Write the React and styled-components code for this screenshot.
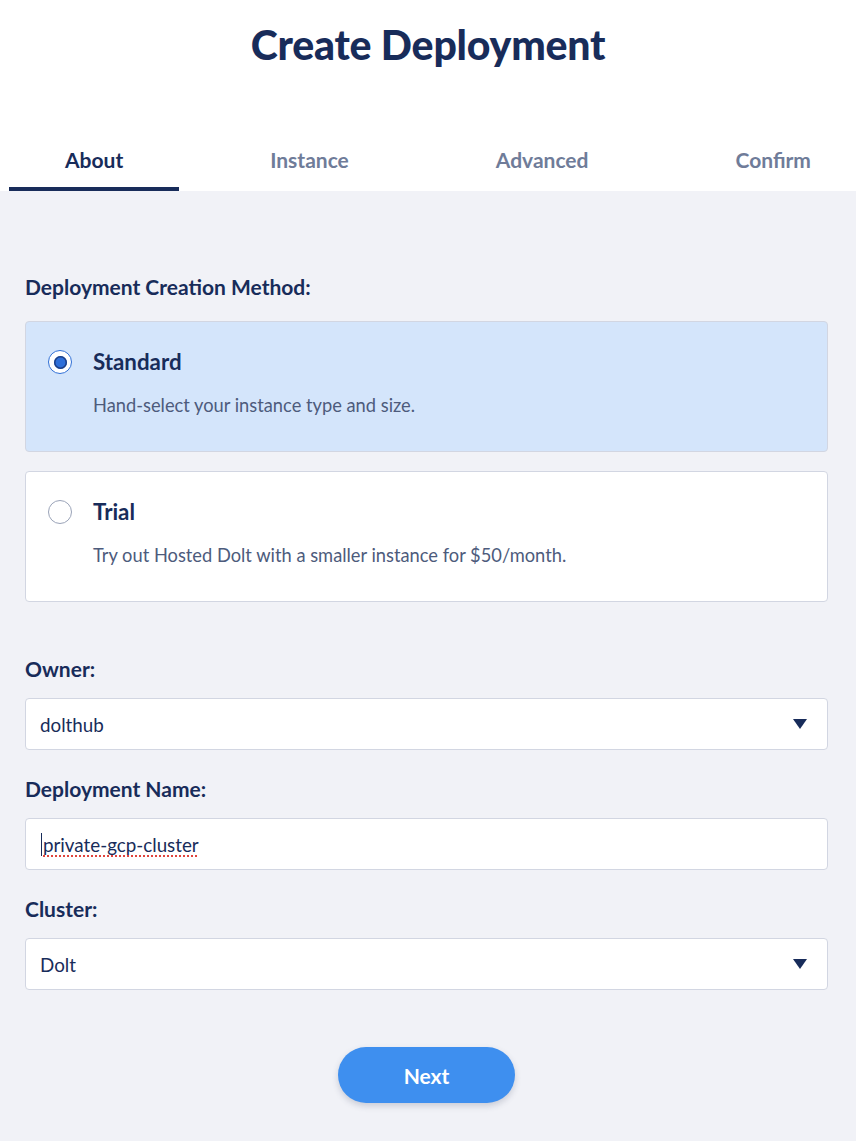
import React, { useState } from "react";
import styled, { createGlobalStyle } from "styled-components";

const GlobalStyle = createGlobalStyle`
  html, body { margin: 0; padding: 0; }
  body {
    font-family: Lato, "Noto Sans", "Liberation Sans", sans-serif;
    background: #f1f2f7;
    color: #182c5a;
  }
  * { box-sizing: border-box; }
`;

const Page = styled.div`
  min-height: 1141px;
  display: flex;
  flex-direction: column;
`;

const Header = styled.div`
  background: #ffffff;
  display: flex;
  flex-direction: column;
`;

const Title = styled.h1`
  margin: 0;
  padding-top: 20px;
  height: 130px;
  text-align: center;
  font-size: 41px;
  font-weight: 900;
  letter-spacing: -0.2px;
  color: #182c5a;
`;

const Tabs = styled.div`
  display: flex;
  gap: 35px;
  padding-left: 9px;
  height: 61px;
`;

const Tab = styled.div`
  padding: 0 56px;
  display: flex;
  align-items: center;
  justify-content: center;
  font-size: 21px;
  font-weight: 700;
  color: ${(p) => (p.$active ? "#182c5a" : "#6f7c99")};
  border-bottom: 4px solid ${(p) => (p.$active ? "#182c5a" : "transparent")};
  padding-top: 2px;
  white-space: nowrap;
`;

const Body = styled.div`
  padding: 84px 28px 40px 25px;
  display: flex;
  flex-direction: column;
`;

const Label = styled.div`
  font-size: 21px;
  font-weight: 700;
  color: #182c5a;
  line-height: 24px;
  margin-bottom: ${(p) => p.$mb || 17}px;
`;

const Options = styled.div`
  display: flex;
  flex-direction: column;
  gap: 19px;
  margin-bottom: 55px;
`;

const OptionCard = styled.label`
  display: grid;
  grid-template-columns: 24px 1fr;
  column-gap: 21px;
  height: 131px;
  padding: 27px 22px 0 22px;
  border-radius: 4px;
  border: 1px solid #d2d6e2;
  background: ${(p) => (p.$selected ? "#d4e5fb" : "#ffffff")};
  cursor: pointer;
`;

const Radio = styled.span`
  width: 24px;
  height: 24px;
  border-radius: 50%;
  margin-top: 1px;
  background: #ffffff;
  border: ${(p) => (p.$checked ? "1.5px solid #2f6fd6" : "1.5px solid #9aa3b8")};
  display: flex;
  align-items: center;
  justify-content: center;
  &::after {
    content: "";
    width: 13px;
    height: 13px;
    border-radius: 50%;
    background: ${(p) => (p.$checked ? "#2e6fd9" : "transparent")};
    box-shadow: ${(p) => (p.$checked ? "0 0 0 1.5px #1d3f86 inset" : "none")};
  }
`;

const OptionText = styled.div`
  display: flex;
  flex-direction: column;
`;

const OptionTitle = styled.div`
  font-size: 22.3px;
  font-weight: 700;
  color: #182c5a;
  line-height: 26px;
  margin-bottom: 18px;
`;

const OptionDesc = styled.div`
  font-size: 18.3px;
  color: #4d5b7c;
  line-height: 24px;
`;

const Field = styled.div`
  display: flex;
  flex-direction: column;
  margin-bottom: 27px;
`;

const Box = styled.div`
  height: 52px;
  background: #ffffff;
  border: 1px solid #d2d6e2;
  border-radius: 4px;
  display: flex;
  align-items: center;
  justify-content: space-between;
  padding: 0 20px 0 14px;
  font-size: 18.8px;
  color: #182c5a;
`;

const Caret = styled.span`
  width: 0;
  height: 0;
  border-left: 7px solid transparent;
  border-right: 7px solid transparent;
  border-top: 10px solid #182c5a;
`;

const InputText = styled.span`
  padding-left: 1px;
  border-left: 1.5px solid #182c5a;
  margin-left: 1px;
  text-decoration: underline dotted #e0443c;
  text-decoration-thickness: 2px;
  text-underline-offset: 4px;
`;

const Actions = styled.div`
  display: flex;
  justify-content: center;
  padding-top: 30px;
`;

const NextButton = styled.button`
  width: 177px;
  height: 56px;
  border: none;
  border-radius: 28px;
  background: #3e8fef;
  color: #ffffff;
  font-family: inherit;
  font-size: 21px;
  font-weight: 700;
  box-shadow: 0 3px 6px rgba(60, 70, 100, 0.22);
  cursor: pointer;
`;

const options = [
  { id: "standard", title: "Standard", desc: "Hand-select your instance type and size." },
  { id: "trial", title: "Trial", desc: "Try out Hosted Dolt with a smaller instance for $50/month." },
];

export default function App() {
  const [method, setMethod] = useState("standard");
  return (
    <Page>
      <GlobalStyle />
      <Header>
        <Title>Create Deployment</Title>
        <Tabs>
          <Tab $active>About</Tab>
          <Tab>Instance</Tab>
          <Tab>Advanced</Tab>
          <Tab>Confirm</Tab>
        </Tabs>
      </Header>
      <Body>
        <Label $mb={22}>Deployment Creation Method:</Label>
        <Options>
          {options.map((o) => (
            <OptionCard key={o.id} $selected={method === o.id} onClick={() => setMethod(o.id)}>
              <Radio $checked={method === o.id} />
              <OptionText>
                <OptionTitle>{o.title}</OptionTitle>
                <OptionDesc>{o.desc}</OptionDesc>
              </OptionText>
            </OptionCard>
          ))}
        </Options>
        <Field>
          <Label>Owner:</Label>
          <Box>
            <span>dolthub</span>
            <Caret />
          </Box>
        </Field>
        <Field>
          <Label>Deployment Name:</Label>
          <Box>
            <InputText>private-gcp-cluster</InputText>
          </Box>
        </Field>
        <Field>
          <Label>Cluster:</Label>
          <Box>
            <span>Dolt</span>
            <Caret />
          </Box>
        </Field>
        <Actions>
          <NextButton>Next</NextButton>
        </Actions>
      </Body>
    </Page>
  );
}
